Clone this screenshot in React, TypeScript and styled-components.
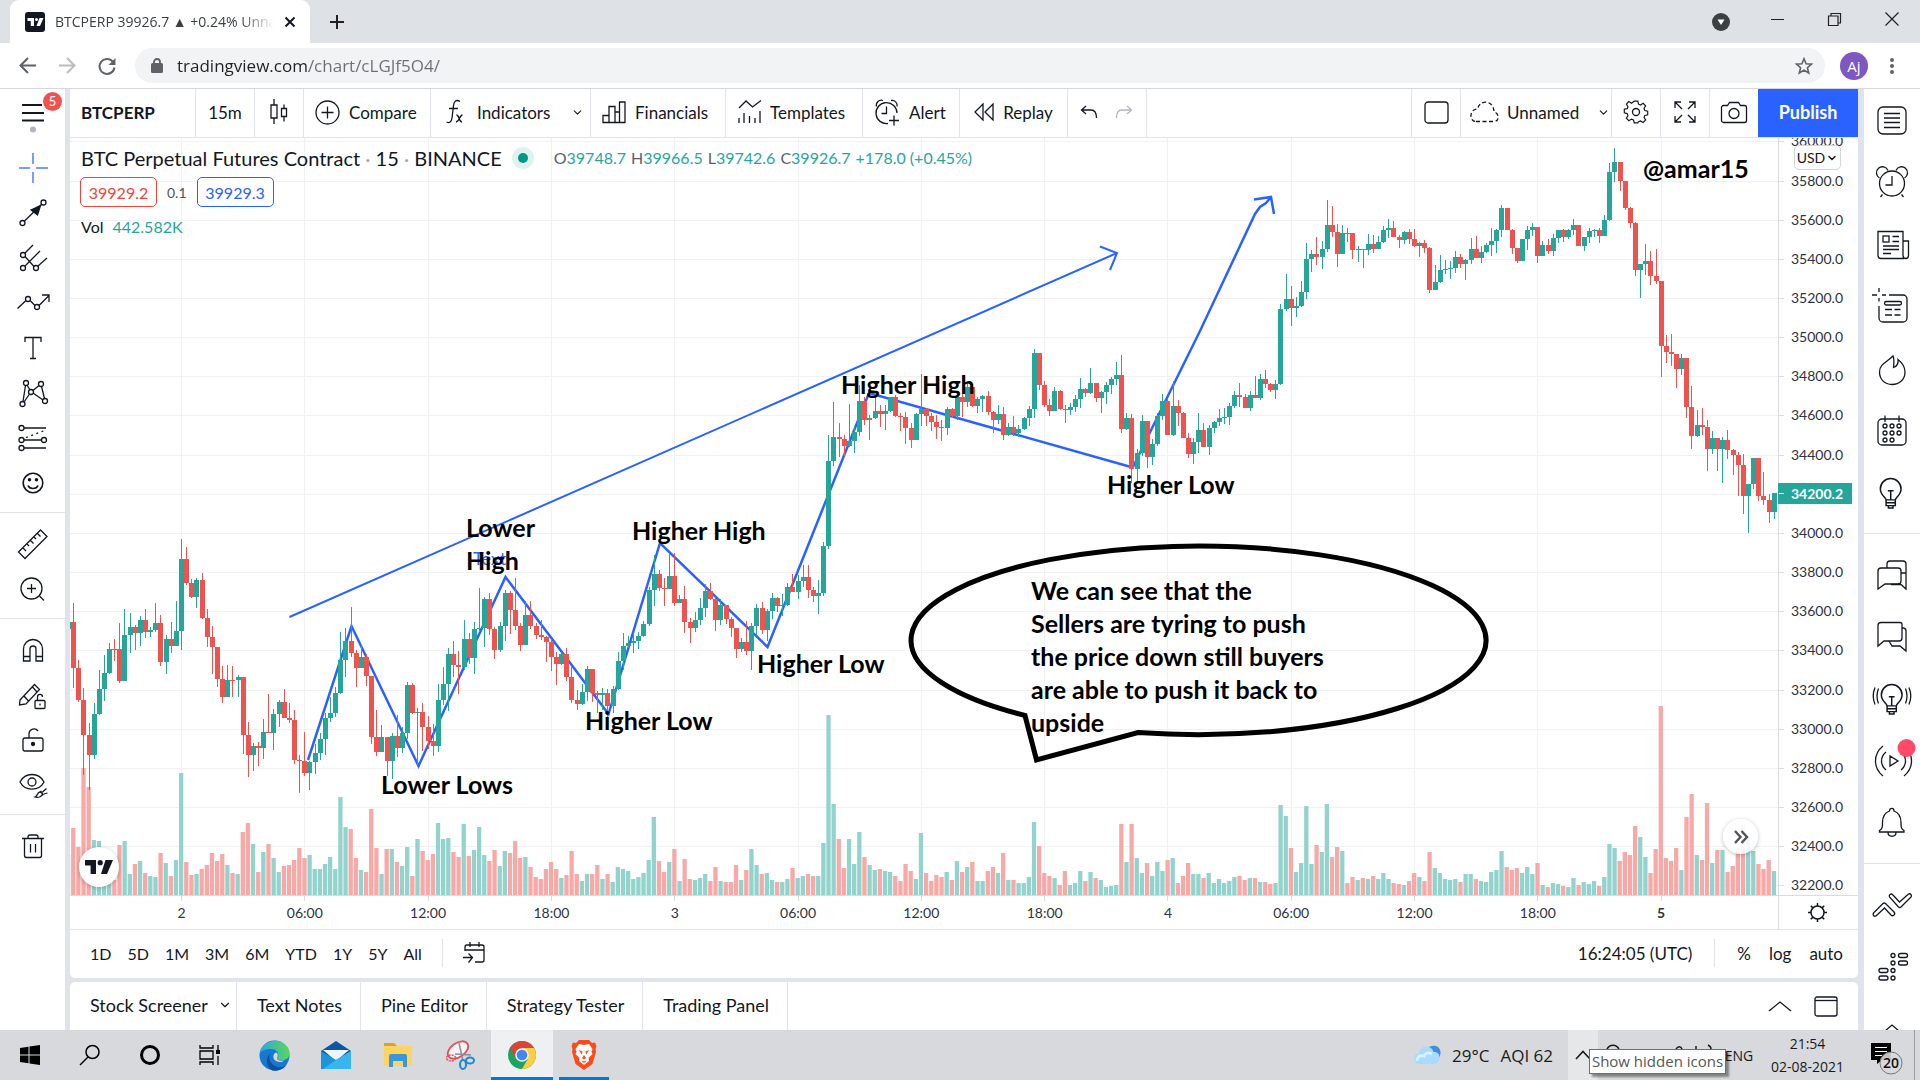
import React from "react";
import styled, { createGlobalStyle, css } from "styled-components";
import { LuChevronDown } from "react-icons/lu";

const GlobalStyle = createGlobalStyle`
  * { box-sizing: border-box; }
  body {
    margin: 0;
    font-family: Lato, "Open Sans", sans-serif;
    color: #131722;
    overflow: hidden;
  }
  button, input {
    font: inherit;
    color: inherit;
    border: 0;
    padding: 0;
    background: none;
  }
  svg { display: block; flex-shrink: 0; overflow: visible; }
`;

/* ---------- chart data ---------- */

// [high, low, close, volume] in chart units, open is the previous close
type Bar = [number, number, number, number];

const FIRST_INDEX = -22;
const FIRST_OPEN = 629;

const bars: Bar[] = [
  [622, 629, 622, 40], [603, 688, 668, 67], [660, 702, 700, 48], [688, 775, 735, 127], [723, 790, 755, 108],
  [703, 759, 714, 55], [670, 715, 689, 54], [655, 701, 673, 40], [643, 674, 649, 40], [639, 661, 649, 15],
  [623, 683, 681, 50], [609, 681, 635, 54], [613, 653, 627, 21], [625, 650, 633, 31], [616, 646, 620, 34],
  [609, 638, 632, 22], [627, 637, 630, 19], [603, 632, 623, 18], [615, 666, 662, 42], [635, 674, 639, 32],
  [622, 653, 646, 19], [601, 646, 631, 35], [539, 650, 559, 122], [547, 585, 583, 33], [579, 598, 597, 20],
  [578, 608, 580, 21], [573, 619, 618, 26], [609, 647, 637, 30], [626, 674, 647, 42], [647, 687, 679, 34],
  [666, 703, 697, 41], [665, 697, 680, 30], [666, 697, 680, 22], [675, 697, 677, 21], [677, 754, 735, 63],
  [722, 777, 755, 72], [743, 771, 746, 51], [742, 766, 748, 23], [719, 759, 732, 43], [694, 733, 733, 51],
  [709, 750, 714, 37], [700, 727, 702, 23], [689, 718, 718, 29], [703, 723, 720, 30], [710, 764, 760, 35],
  [755, 793, 761, 47], [732, 776, 773, 37], [761, 790, 762, 40], [744, 774, 753, 26], [733, 760, 739, 26],
  [713, 755, 718, 31], [697, 722, 713, 38], [687, 717, 693, 26], [632, 694, 660, 98], [628, 677, 641, 68],
  [607, 657, 653, 66], [650, 687, 668, 37], [646, 668, 657, 25], [654, 686, 676, 23], [676, 744, 737, 86],
  [710, 756, 752, 47], [725, 752, 737, 21], [737, 776, 761, 46], [733, 779, 736, 46], [715, 757, 748, 33],
  [727, 753, 733, 29], [682, 739, 685, 48], [683, 714, 713, 19], [708, 765, 712, 56], [703, 751, 727, 44],
  [716, 749, 741, 35], [724, 756, 746, 41], [684, 752, 700, 72], [667, 705, 684, 56], [648, 711, 654, 57],
  [641, 677, 665, 43], [651, 694, 667, 38], [620, 670, 639, 71], [633, 664, 658, 39], [622, 674, 629, 45],
  [588, 632, 628, 68], [597, 647, 599, 40], [593, 635, 629, 34], [627, 659, 650, 45], [622, 652, 626, 29],
  [590, 641, 593, 44], [591, 634, 610, 42], [578, 630, 626, 54], [623, 651, 645, 37], [601, 644, 615, 38],
  [601, 629, 626, 28], [623, 639, 635, 18], [620, 640, 637, 16], [636, 662, 642, 26], [639, 671, 657, 33],
  [652, 685, 664, 26], [652, 665, 654, 17], [648, 681, 677, 20], [667, 703, 700, 44], [690, 710, 704, 21],
  [684, 705, 692, 14], [666, 701, 669, 21], [669, 702, 693, 21], [691, 713, 695, 30], [688, 710, 693, 16],
  [689, 719, 706, 21], [686, 713, 689, 13], [652, 690, 661, 28], [633, 670, 646, 26], [636, 648, 643, 24],
  [635, 653, 641, 16], [632, 649, 636, 18], [621, 637, 624, 22], [587, 626, 590, 35], [555, 606, 574, 78],
  [570, 591, 588, 34], [578, 606, 589, 23], [553, 589, 576, 33], [553, 606, 603, 46], [595, 603, 599, 14],
  [586, 633, 622, 36], [618, 643, 628, 16], [612, 632, 620, 15], [598, 625, 608, 17], [584, 617, 591, 21],
  [583, 600, 599, 14], [597, 631, 620, 28], [599, 625, 605, 14], [605, 624, 619, 13], [617, 637, 628, 13],
  [628, 658, 649, 30], [638, 652, 642, 15], [621, 655, 651, 25], [623, 670, 626, 46], [604, 636, 608, 30],
  [602, 634, 630, 21], [609, 641, 611, 22], [593, 619, 598, 15], [597, 612, 606, 13], [594, 616, 605, 13],
  [583, 606, 587, 16], [574, 592, 592, 27], [575, 599, 581, 17], [565, 587, 577, 19], [565, 598, 590, 21],
  [587, 602, 596, 19], [580, 614, 593, 19], [542, 596, 546, 52], [435, 549, 461, 180], [402, 466, 437, 91],
  [423, 457, 439, 56], [435, 456, 446, 27], [404, 447, 441, 56], [426, 453, 432, 31], [385, 436, 401, 63],
  [397, 425, 420, 38], [415, 440, 418, 30], [395, 419, 411, 25], [405, 427, 414, 26], [405, 430, 411, 24],
  [397, 412, 397, 23], [395, 417, 416, 19], [413, 431, 417, 14], [412, 444, 428, 31], [423, 448, 440, 24],
  [413, 440, 414, 16], [374, 426, 409, 62], [408, 426, 416, 22], [413, 431, 422, 14], [415, 439, 427, 20],
  [420, 441, 428, 18], [407, 435, 409, 23], [408, 418, 416, 15], [394, 420, 397, 34], [393, 417, 402, 23],
  [383, 407, 387, 28], [384, 407, 406, 33], [397, 413, 399, 14], [395, 412, 396, 14], [391, 415, 412, 24],
  [411, 433, 420, 28], [405, 424, 414, 22], [407, 440, 435, 42], [423, 436, 427, 15], [416, 436, 433, 15],
  [425, 437, 429, 12], [417, 430, 418, 12], [406, 426, 409, 18], [349, 418, 353, 73], [353, 390, 385, 49],
  [381, 407, 405, 22], [399, 416, 411, 19], [387, 411, 391, 17], [390, 410, 409, 10], [405, 423, 410, 24],
  [403, 415, 407, 10], [395, 412, 399, 12], [378, 408, 389, 24], [388, 397, 393, 14], [368, 394, 383, 23],
  [383, 402, 398, 17], [391, 413, 392, 15], [382, 404, 385, 8], [377, 394, 379, 9], [362, 385, 375, 10],
  [355, 433, 429, 71], [413, 430, 418, 33], [414, 483, 469, 71], [449, 483, 453, 37], [415, 456, 421, 22],
  [421, 468, 457, 32], [439, 465, 444, 19], [413, 446, 416, 33], [394, 420, 401, 24], [399, 435, 435, 35],
  [381, 436, 406, 37], [400, 426, 413, 12], [412, 438, 438, 19], [433, 458, 454, 32], [438, 464, 442, 21],
  [413, 453, 430, 21], [423, 447, 447, 17], [425, 455, 428, 22], [421, 433, 422, 12], [409, 426, 418, 16],
  [408, 424, 417, 12], [403, 425, 406, 14], [391, 408, 395, 18], [383, 407, 397, 19], [394, 408, 408, 15],
  [391, 411, 395, 17], [376, 398, 398, 17], [374, 400, 379, 13], [370, 388, 384, 13], [383, 392, 390, 11],
  [380, 399, 384, 12], [304, 385, 309, 90], [274, 311, 299, 79], [286, 326, 308, 47], [297, 317, 306, 23],
  [281, 307, 292, 32], [243, 299, 259, 89], [250, 272, 254, 31], [237, 265, 257, 50], [241, 269, 249, 43],
  [200, 252, 225, 91], [206, 237, 232, 38], [224, 267, 254, 48], [225, 254, 233, 44], [228, 242, 233, 12],
  [233, 259, 250, 18], [246, 262, 249, 15], [249, 268, 250, 17], [234, 255, 244, 16], [235, 253, 249, 19],
  [236, 249, 242, 16], [226, 243, 230, 22], [219, 238, 228, 16], [221, 237, 237, 12], [235, 248, 240, 11],
  [231, 244, 232, 10], [229, 244, 239, 14], [229, 247, 246, 22], [242, 257, 243, 18], [240, 253, 248, 14],
  [247, 293, 290, 43], [265, 290, 282, 27], [255, 283, 270, 22], [260, 274, 269, 16], [261, 279, 268, 15],
  [251, 273, 257, 16], [254, 268, 264, 13], [259, 280, 260, 21], [238, 264, 249, 21], [236, 258, 258, 16],
  [246, 263, 252, 14], [243, 253, 245, 13], [228, 256, 241, 23], [229, 253, 230, 25], [205, 237, 208, 44],
  [208, 230, 230, 28], [229, 254, 248, 25], [248, 263, 261, 27], [239, 261, 239, 22], [226, 250, 230, 28],
  [223, 236, 227, 21], [227, 263, 256, 32], [241, 256, 245, 10], [239, 254, 251, 8], [234, 256, 238, 12],
  [230, 243, 230, 11], [229, 242, 237, 9], [229, 239, 230, 8], [219, 235, 225, 17], [225, 246, 246, 10],
  [237, 251, 237, 13], [228, 243, 231, 11], [229, 237, 230, 14], [228, 243, 236, 9], [215, 236, 220, 18],
  [163, 221, 172, 51], [148, 182, 162, 47], [162, 191, 181, 34], [181, 210, 208, 43], [207, 228, 223, 40],
  [222, 276, 270, 69], [264, 298, 264, 58], [244, 275, 261, 38], [251, 285, 276, 22], [249, 284, 281, 46],
  [281, 377, 346, 189], [335, 363, 352, 37], [334, 366, 354, 34], [354, 388, 369, 47], [354, 375, 358, 25],
  [358, 418, 407, 78], [386, 449, 436, 101], [410, 437, 425, 40], [408, 435, 427, 35], [420, 471, 449, 92],
  [431, 454, 438, 32], [439, 471, 449, 45], [437, 483, 440, 45], [430, 459, 450, 23], [449, 475, 455, 29],
  [452, 496, 465, 47], [454, 514, 496, 70], [484, 533, 484, 57], [458, 489, 458, 44], [458, 501, 496, 31],
  [472, 505, 500, 26], [494, 523, 512, 35], [493, 519, 493, 24],
];

const barX = (i: number) => 181.5 + i * 5.1377;
const priceY = (price: number) => 180.5 + (35800 - price) * 0.1958;

const candles = bars.map(([high, low, close, volume], n) => {
  const open = n === 0 ? FIRST_OPEN : bars[n - 1][2];
  return { x: barX(n + FIRST_INDEX), open, high, low, close, volume, up: close < open };
});

const timeLabels = ["2", "06:00", "12:00", "18:00", "3", "06:00", "12:00", "18:00", "4", "06:00", "12:00", "18:00", "5"];
const priceLabels = Array.from({ length: 20 }, (_, i) => 36000 - i * 200);

const notes = [
  { x: 466, y: 537, text: "Lower" },
  { x: 466, y: 570, text: "High" },
  { x: 381, y: 794, text: "Lower Lows" },
  { x: 632, y: 540, text: "Higher High" },
  { x: 585, y: 730, text: "Higher Low" },
  { x: 757, y: 673, text: "Higher Low" },
  { x: 841, y: 394, text: "Higher High" },
  { x: 1107, y: 494, text: "Higher Low" },
  { x: 1643, y: 178, text: "@amar15" },
  { x: 1031, y: 600, text: "We can see that the" },
  { x: 1031, y: 633, text: "Sellers are tyring to push" },
  { x: 1031, y: 666, text: "the price down still buyers" },
  { x: 1031, y: 699, text: "are able to push it back to" },
  { x: 1031, y: 732, text: "upside" },
];

/* ---------- page ---------- */

const Page = styled.div`
  display: flex;
  flex-direction: column;
  height: 100vh;
  background: #fff;
`;

/* ---------- browser ---------- */

const segoe = css`
  font-family: "Open Sans", "Noto Sans", sans-serif;
`;

const TabStrip = styled.div`
  ${segoe}
  height: 43px;
  background: #dee1e6;
  display: flex;
  padding-left: 10px;
  font-size: 14px;
`;

const Tab = styled.div`
  width: 300px;
  height: 43px;
  background: #fff;
  border-radius: 9px 9px 0 0;
  display: flex;
  align-items: center;
  padding: 0 14px 0 15px;
  gap: 10px;
`;

const TabTitle = styled.span`
  flex: 1;
  overflow: hidden;
  white-space: nowrap;
  color: #3c4043;
  mask-image: linear-gradient(to right, #000 85%, transparent);
`;

const StripButton = styled.button<{ $w?: number; $low?: boolean }>`
  width: ${p => p.$w ?? 57}px;
  height: ${p => (p.$low ? 43 : 38)}px;
  display: flex;
  align-items: center;
  justify-content: center;
  color: #202124;
`;

const Spacer = styled.div`
  flex: 1;
`;

const AddressRow = styled.div`
  ${segoe}
  height: 46px;
  border-bottom: 1px solid #d5d7db;
  display: flex;
  align-items: center;
  padding: 0 8px 0 7px;
  color: #5f6368;
`;

const NavButton = styled.button`
  width: 40px;
  height: 36px;
  display: flex;
  align-items: center;
  justify-content: center;
  color: #5f6368;
`;

const UrlPill = styled.label`
  flex: 1;
  height: 35px;
  margin: 0 15px 0 8px;
  border-radius: 18px;
  background: #f1f3f4;
  display: flex;
  align-items: center;
  padding: 0 12px 0 16px;
  gap: 14px;
`;

const UrlInput = styled.input`
  flex: 1;
  outline: none;
  font-size: 17px;
  background: linear-gradient(to right, #202124 132px, #6b6f74 132px);
  background-clip: text;
  color: transparent;
`;

const Avatar = styled.button`
  width: 28px;
  height: 28px;
  margin-right: 4px;
  border-radius: 50%;
  background: #7e57c2;
  color: #fff;
  font-size: 15px;
`;

/* ---------- workspace ---------- */

const Workspace = styled.div`
  flex: 1;
  min-height: 0;
  display: flex;
  background: #e0e3eb;
`;

const LeftBar = styled.nav`
  width: 65px;
  margin-right: 5px;
  background: #fff;
`;

const MenuButton = styled.button`
  position: relative;
  width: 65px;
  height: 48px;
  display: flex;
  justify-content: center;
  padding-top: 13px;
`;

const MenuBadge = styled.span`
  position: absolute;
  top: 3px;
  right: 3px;
  width: 19px;
  height: 19px;
  border-radius: 50%;
  background: #ef5350;
  color: #fff;
  font-size: 13px;
  line-height: 19px;
  text-align: center;
`;

const ToolGroup = styled.div`
  padding: 8px 0 7px;
  border-bottom: 1px solid #e0e3eb;

  &:last-child {
    border-bottom: 0;
  }
`;

const ToolButton = styled.button`
  width: 65px;
  height: 45px;
  display: flex;
  align-items: center;
  justify-content: center;
`;

const Main = styled.main`
  flex: 1;
  min-width: 0;
  display: flex;
  flex-direction: column;
  gap: 4px;
`;

const ChartPanel = styled.section`
  flex: 1;
  min-height: 0;
  display: flex;
  flex-direction: column;
  background: #fff;
  border-radius: 0 0 5px 5px;
`;

const Header = styled.header`
  height: 49px;
  display: flex;
  border-bottom: 1px solid #e0e3eb;
  font-size: 17px;
`;

const HeaderButton = styled.button<{ $w: number; $bold?: boolean; $left?: boolean; $noLine?: boolean }>`
  width: ${p => p.$w}px;
  display: flex;
  align-items: center;
  justify-content: ${p => (p.$left ? "flex-start" : "center")};
  padding-left: ${p => (p.$left ? 11 : 0)}px;
  padding-bottom: 2px;
  gap: 9px;
  font-weight: ${p => (p.$bold ? 700 : 400)};
  border-right: ${p => (p.$noLine ? 0 : 1)}px solid #e0e3eb;
  white-space: nowrap;
`;

const HeaderGap = styled.div`
  flex: 1;
  border-left: 1px solid #e0e3eb;
  border-right: 1px solid #e0e3eb;
`;

const Publish = styled.button`
  width: 100px;
  padding-bottom: 2px;
  background: #2962ff;
  color: #fff;
  font-size: 18px;
  font-weight: 700;
`;

const ChartArea = styled.div`
  position: relative;
  flex: 1;
  min-height: 0;
  overflow: hidden;
`;

const ChartSvg = styled.svg`
  width: 100%;
  height: 100%;
  font-family: Lato, sans-serif;
`;

const Legend = styled.div`
  position: absolute;
  top: 7px;
  left: 10px;
  display: flex;
  flex-direction: column;
  font-size: 16px;
`;

const LegendRow = styled.div`
  display: flex;
  align-items: center;
  height: 25px;
`;

const SymbolTitle = styled.h1`
  margin: 0 16px 0 1px;
  font-size: 20px;
  font-weight: 400;

  i {
    font-style: normal;
    color: #a3a6af;
  }
`;

const StatusDot = styled.span`
  width: 10px;
  height: 10px;
  border-radius: 50%;
  background: #009688;
  box-shadow: 0 0 0 6px #dff2f0;
  margin: 0 26px 0 0;
`;

const Ohlc = styled.span`
  margin-right: 5px;
  color: #26a69a;

  b {
    font-weight: 400;
    color: #5d606b;
  }
`;

const QuoteRow = styled.div`
  display: flex;
  align-items: center;
  gap: 10px;
  margin: 7px 0 7px;
  font-size: 14px;
  color: #50535e;
`;

const VolumeRow = styled(LegendRow)`
  gap: 9px;
  padding-left: 1px;
`;

const QuoteButton = styled.button<{ $color: string }>`
  width: 77px;
  height: 30px;
  border: 1px solid ${p => p.$color};
  border-radius: 5px;
  color: ${p => p.$color};
  background: #fff;
  font-size: 16px;
`;

const CurrencyButton = styled.button`
  position: absolute;
  top: 7px;
  right: 17px;
  width: 47px;
  height: 25px;
  display: flex;
  align-items: center;
  justify-content: center;
  gap: 1px;
  border: 1px solid #d1d4dc;
  border-radius: 5px;
  background: #fff;
  font-size: 14px;
`;

const RoundButton = styled.button<{ $size: number }>`
  position: absolute;
  width: ${p => p.$size}px;
  height: ${p => p.$size}px;
  border-radius: 50%;
  background: rgba(255, 255, 255, 0.88);
  box-shadow: 0 1px 4px rgba(0, 0, 0, 0.25);
  display: flex;
  align-items: center;
  justify-content: center;
`;

const LogoButton = styled(RoundButton)`
  left: 9px;
  bottom: 42px;
  background: #fff;
`;

const ScrollButton = styled(RoundButton)`
  right: 100px;
  bottom: 75px;
  color: #50535e;
`;

const RangeBar = styled.div`
  height: 49px;
  border-top: 1px solid #e0e3eb;
  display: flex;
  align-items: center;
  padding: 0 15px 2px 20px;
  gap: 16px;
  font-size: 16px;
`;

const TextButton = styled.button`
  white-space: nowrap;
`;

const Divider = styled.span`
  width: 1px;
  height: 28px;
  margin: 0 4px;
  background: #e0e3eb;
`;

const RangeRight = styled.div`
  display: flex;
  align-items: center;
  gap: 18px;
  font-size: 17px;
`;

const BottomTabs = styled.section`
  height: 48px;
  display: flex;
  background: #fff;
  border-radius: 5px 5px 0 0;
  font-size: 18px;
`;

const BottomTab = styled.button`
  display: flex;
  align-items: center;
  gap: 10px;
  padding: 0 18px 2px 20px;
  border-right: 1px solid #e0e3eb;
  white-space: nowrap;

  &:first-child {
    padding-right: 4px;
  }
`;

const BottomActions = styled.div`
  margin-left: auto;
  display: flex;
  align-items: center;
  gap: 22px;
  padding-right: 20px;
`;

const RightBar = styled.nav`
  width: 56px;
  margin-left: 6px;
  background: #fff;
  overflow: hidden;
`;

const WidgetGroup = styled.div`
  padding: 1px 0 9px;
  border-bottom: 1px solid #e0e3eb;

  & + & {
    padding-top: 10px;
  }
`;

const WidgetButton = styled.button`
  width: 56px;
  height: 62px;
  display: flex;
  align-items: center;
  justify-content: center;
`;

/* ---------- taskbar ---------- */

const Taskbar = styled.footer`
  ${segoe}
  position: relative;
  height: 50px;
  background: #d8d9dc;
  display: flex;
  color: #1b1b1b;
`;

const Pinned = styled.div`
  display: flex;
  margin-left: 3px;
`;

const TaskButton = styled.button<{ $wide?: boolean; $active?: boolean; $running?: boolean }>`
  position: relative;
  width: ${p => (p.$wide ? 62 : 60)}px;
  display: flex;
  align-items: center;
  justify-content: center;
  color: #000;
  background: ${p => (p.$active ? "#eff0f1" : "none")};

  &::after {
    content: "";
    display: ${p => (p.$running ? "block" : "none")};
    position: absolute;
    bottom: 0;
    left: ${p => (p.$active ? 0 : 6)}px;
    right: ${p => (p.$active ? 0 : 6)}px;
    height: 3px;
    background: #0078d7;
  }
`;

const Weather = styled.button`
  display: flex;
  align-items: center;
  gap: 11px;
  font-size: 17px;
  margin-right: 15px;
`;

const TrayToggle = styled.button`
  position: relative;
  width: 30px;
  background: #e6e7e9;
  display: flex;
  align-items: center;
  justify-content: center;
`;

const Tooltip = styled.span`
  position: absolute;
  top: 19px;
  left: 21px;
  z-index: 2;
  width: 137px;
  height: 25px;
  border: 1px solid #6f6f6f;
  background: #fff;
  box-shadow: 3px 3px 2px rgba(0, 0, 0, 0.4);
  color: #575757;
  font-size: 15px;
  line-height: 23px;
  text-align: center;
  white-space: nowrap;
`;

const TrayIcons = styled.div`
  width: 126px;
  padding-top: 15px;
`;

const Language = styled.button`
  width: 30px;
  font-size: 14px;
`;

const Clock = styled.button`
  width: 107px;
  font-size: 14px;
  line-height: 23px;
`;

const ActionCenter = styled.button`
  width: 54px;
  border-right: 1px solid #9a9b9e;
  margin-right: 5px;
  display: flex;
  align-items: center;
  justify-content: center;
  padding-top: 8px;
`;

/* ---------- icons ---------- */

type IconProps = {
  w?: number;
  h?: number;
  sw?: number;
  children: React.ReactNode;
};

const Icon = ({ w = 36, h = 36, sw = 1.3, children }: IconProps) => (
  <svg width={w} height={h} viewBox={`0 0 ${w} ${h}`} fill="none" stroke="currentColor" strokeWidth={sw} aria-hidden="true">
    {children}
  </svg>
);

const TvMark = ({ width = 28, color = "#131722" }: { width?: number; color?: string }) => (
  <svg width={width} height={width / 2} viewBox="0 0 28 14" fill={color} aria-hidden="true">
    <path d="M0 0h11v14H5.6V5.4H0z" />
    <circle cx="15.200" cy="2.700" r="2.600" />
    <path d="M20.500 0H28l-6 14h-6z" />
  </svg>
);

const bulb = (
  <>
    <path d="M14 22.500c0-2-5-4-5-9.500a9 9 0 0 1 18 0c0 5.500-5 7.500-5 9.500z" />
    <path d="M14 22.500v5h8v-5M14 25h8M16 27.500v2h4v-2M15.500 14.500h5M18 14.500v8" />
  </>
);

const leftTools: { label: string; icon: React.ReactNode }[][] = [
  [
    {
      label: "Cross",
      icon: <Icon><g stroke="#4c7dff" strokeWidth={1.5}><path d="M18 3v11M18 22v11M4 18h11M21 18h12" /></g></Icon>,
    },
    {
      label: "Trend line",
      icon: (
        <Icon>
          <circle cx="7.500" cy="28" r="2.500" /><circle cx="28.500" cy="7.500" r="2.500" />
          <path d="M9.500 26 26.500 9.500" /><path d="M16 15l9.500-4.500L22.500 20z" fill="currentColor" />
        </Icon>
      ),
    },
    {
      label: "Pitchfork",
      icon: (
        <Icon>
          <circle cx="8" cy="15" r="2.500" /><circle cx="8" cy="28" r="2.500" /><circle cx="21" cy="28" r="2.500" />
          <path d="M10 16.500 19 26.500M10 13 18 5M10 26 25 11M23 26l9-8" />
        </Icon>
      ),
    },
    {
      label: "Brush",
      icon: (
        <Icon>
          <circle cx="13" cy="14" r="2.500" /><circle cx="22" cy="22" r="2.500" />
          <path d="M2.500 23.500 11 15.500M15 15.500l5 5M24 20.500 34 10.500M27 10h7v7" />
        </Icon>
      ),
    },
    { label: "Text", icon: <Icon><path d="M10 12V7.500h16V12M18 7.500v21M15 28.500h6" /></Icon> },
    {
      label: "Patterns",
      icon: (
        <Icon>
          <circle cx="11" cy="8" r="2.500" /><circle cx="26" cy="9" r="2.500" /><circle cx="16" cy="17" r="2.500" />
          <circle cx="7.500" cy="29" r="2.500" /><circle cx="30" cy="26" r="2.500" />
          <path d="M10.500 10.500 8 26.500M12 10l3 5M18 15.500l6-5M26.500 11.500l3 12M18 18l10 7M14.500 19 9 27" />
        </Icon>
      ),
    },
    {
      label: "Forecast",
      icon: (
        <Icon>
          <circle cx="6.500" cy="8" r="2.500" /><circle cx="6.500" cy="20" r="2.500" /><circle cx="29" cy="20" r="2.500" /><circle cx="6.500" cy="28" r="2.500" />
          <path d="M9 8h22M9 20h17.500M9 28h22" /><path d="M11 17.500 31 10" strokeDasharray="2 3.500" />
        </Icon>
      ),
    },
    {
      label: "Icons",
      icon: (
        <Icon sw={1.6}>
          <circle cx="18" cy="18" r="9.800" /><path d="M13 20.500c1.500 4 8.500 4 10 0" />
          <circle cx="14.500" cy="14.800" r="1" fill="currentColor" /><circle cx="21.500" cy="14.800" r="1" fill="currentColor" />
        </Icon>
      ),
    },
  ],
  [
    { label: "Measure", icon: <Icon><path d="M3.500 26 25.500 4l6.500 6.500-22 22zM8 22l3 3M12 18l2 2M15.500 14.500l3 3M19 11l2 2M22.500 7.500l3 3" /></Icon> },
    { label: "Zoom in", icon: <Icon><circle cx="16.500" cy="17.500" r="10.500" /><path d="M24.500 25l4.500 4.500M12 17.500h9M16.500 13v9" /></Icon> },
  ],
  [
    { label: "Magnet", icon: <Icon><path d="M8.500 29V17a9.500 9.500 0 0 1 19 0v12h-6.500V17a3 3 0 0 0-6 0v12zM8.500 24.500H15M21 24.500h6.500" /></Icon> },
    {
      label: "Stay in drawing mode",
      icon: (
        <Icon>
          <path d="M5 23 19.500 7.500l5 5L11 27l-6.500 1zM9 19l4.500 5M17.500 10l4.500 5" />
          <rect x="20" y="23.500" width="10" height="8" rx="1" /><path d="M22.500 23.500V20c0-3.500 5-3.500 5 0M25 26.500v2" />
        </Icon>
      ),
    },
    { label: "Lock drawings", icon: <Icon><rect x="8" y="16" width="20" height="13" rx="2" /><path d="M14 16v-4.500a5 5 0 0 1 9-2.500" /><circle cx="18" cy="22" r="1.500" fill="currentColor" /></Icon> },
    {
      label: "Hide drawings",
      icon: (
        <Icon>
          <path d="M5 15c5-10 19-10 24 0-5 9.500-19 9.500-24 0z" /><circle cx="17" cy="15" r="4" />
          <path d="M20 30c3-1 2-5 5-5l2.500 1.500c0 3-4 4.500-7.500 3.500zM25.500 24l3 4M27.500 25l4-3.500M29 27l3.500-1" />
        </Icon>
      ),
    },
  ],
  [
    { label: "Remove", icon: <Icon><path d="M9.500 10.500v17a2 2 0 0 0 2 2h13a2 2 0 0 0 2-2v-17M7 10.500h22M13 10.500V9a2 2 0 0 1 2-2h6a2 2 0 0 1 2 2v1.500M15.500 16v8.500M20.500 16v8.500" /></Icon> },
  ],
];

const widgets: { label: string; icon: React.ReactNode }[][] = [
  [
    { label: "Watchlist", icon: <Icon><rect x="4" y="4" width="28" height="27" rx="5" /><path d="M10 10.500h16M10 15h16M10 19.500h16M10 24.500h16" /></Icon> },
    {
      label: "Alerts",
      icon: (
        <Icon>
          <circle cx="18" cy="18.500" r="12.500" /><path d="M18 11v9h-6.500M8.500 29.500 6.500 32M27.500 29.500l2 2.500" />
          <path d="M5.500 13a6 6 0 1 1 8.500-7.500M22 5.500a6 6 0 1 1 8.500 7.500" />
        </Icon>
      ),
    },
    {
      label: "News",
      icon: (
        <Icon>
          <path d="M30 31.500H7a3 3 0 0 1-3-3v-24h25v24c0 4 5.500 4 5.500 0V14H29" />
          <rect x="9" y="9" width="6" height="6" /><path d="M18.500 9.500H25M18.500 14.500H25M9 19h16M9 22.500h16M9 26.500h8" />
        </Icon>
      ),
    },
    {
      label: "Data window",
      icon: (
        <Icon>
          <path d="M5-1v4M5 9v3.500M-2 6h5M8 6h4M15 6h14a4 4 0 0 1 4 4v19a4 4 0 0 1-4 4H9a4 4 0 0 1-4-4V17" />
          <rect x="10.500" y="12.500" width="17" height="3.500" rx="1.700" />
          <path d="M11 20.500h7M20.500 20.500h6M11 26h7M20.500 26h6" />
        </Icon>
      ),
    },
    {
      label: "Hotlists",
      icon: <Icon><path d="M18 33.500c-7.500 0-12.500-5.500-12.500-12.500C5.500 13 13 11 19 5c1.500 3.500 1 6 .5 11.500 3-1 5-4 4.500-8 5 4 7 8 7 12.500 0 7.500-5.500 12.500-13 12.500z" /></Icon>,
    },
    {
      label: "Calendar",
      icon: (
        <Icon>
          <rect x="4" y="6" width="28" height="26" rx="4" /><path d="M11 2.500V9M25 2.500V9" />
          {[[18, 13], [25, 13], [11, 13], [11, 20], [18, 20], [25, 20], [11, 27], [18, 27]].map(([x, y]) => (
            <circle key={`${x}-${y}`} cx={x} cy={y} r="2" />
          ))}
        </Icon>
      ),
    },
    { label: "Ideas", icon: <Icon><g transform="translate(-4 -1) scale(1.150)">{bulb}</g></Icon> },
  ],
  [
    { label: "Public chats", icon: <Icon><path d="M4 32V14a3 3 0 0 1 3-3h17a3 3 0 0 1 3 3v10a3 3 0 0 1-3 3H11z" /><path d="M13 11V7a3 3 0 0 1 3-3h13a3 3 0 0 1 3 3v25l-5-4.500H17M27 16h5" /></Icon> },
    { label: "Private chats", icon: <Icon><path d="M4 27V6.500a3 3 0 0 1 3-3h19a2 2 0 0 1 2 2V19a3 3 0 0 1-3 3H10z" /><path d="M28 9h1.500a3 3 0 0 1 2.500 3v20l-6-5H18l-3-5" /></Icon> },
    {
      label: "Idea stream",
      icon: (
        <Icon w={44}>
          <g transform="translate(1 -1) scale(1.150)">{bulb}</g>
          <path d="M8.500 7.500c-2 5-2 10 0 15M5 6.500c-2.500 6-2.500 11 0 17M35.500 7.500c2 5 2 10 0 15M39 6.500c2.500 6 2.500 11 0 17" />
        </Icon>
      ),
    },
    {
      label: "Streams",
      icon: (
        <Icon w={44}>
          <path d="M20 13v10l8-5zM13 3c-10 8-10 22 0 30M16 9c-6 5-6 13 0 18M31 9c6 5 6 13 0 18M34 3c10 8 10 22 0 30" />
          <circle cx="36.500" cy="5" r="9" fill="#ff4a68" stroke="none" />
        </Icon>
      ),
    },
    { label: "Notifications", icon: <Icon><path d="M5.500 26.500c3-2 3-3 3-8 0-7 3-10 7-11.500 0-3.500 4.500-3.500 4.500 0 4 1.500 7 4.500 7 11.500 0 5 0 6 3 8v1.500H5.500zM14 28.500c0 5 8 5 8 0" transform="translate(0 -1)" /></Icon> },
  ],
  [
    {
      label: "Order panel",
      icon: (
        <Icon w={44}>
          <path d="M3.500 26 13 16.500a2 2 0 0 1 2.500 0L24 25a2 2 0 0 1-3 3l-6.500-7L6 29a2 2 0 0 1-2.500-3z" />
          <path d="M19.500 10a2 2 0 0 1 3-2.500l7 7.500 9-8a2 2 0 0 1 2.500 3l-10 10a2 2 0 0 1-2.500 0z" />
        </Icon>
      ),
    },
    {
      label: "DOM",
      icon: (
        <Icon>
          {[5, 12.5, 20, 27.5].map(y => <circle key={y} cx="19" cy={y + 1.5} r="2" />)}
          <rect x="24.500" y="4.500" width="9" height="4" rx="2" /><rect x="24.500" y="12" width="9" height="4" rx="2" />
          <rect x="5" y="19.500" width="9" height="4" rx="2" /><rect x="5" y="27" width="9" height="4" rx="2" />
        </Icon>
      ),
    },
    { label: "Object tree", icon: <Icon><path d="M4 26 18 14 32 26 18 34z" /></Icon> },
  ],
];

/* ---------- sections ---------- */

const BrowserChrome = () => (
  <>
    <TabStrip>
      <Tab>
        <svg width="20" height="20" viewBox="0 0 20 20" aria-hidden="true">
          <rect width="20" height="20" rx="3" fill="#131722" />
          <path d="M2.500 6h6.500v8H5.800V9H2.500zM14.500 6h4l-3.500 8h-3.500z" fill="#fff" />
          <circle cx="11.500" cy="7.500" r="1.500" fill="#fff" />
        </svg>
        <TabTitle>BTCPERP 39926.7 ▲ +0.24% Unnamed</TabTitle>
        <button aria-label="Close tab">
          <Icon w={12} h={12} sw={2}><path d="M1.500 1.500l9 9M10.500 1.500l-9 9" /></Icon>
        </button>
      </Tab>
      <StripButton $w={54} $low aria-label="New tab">
        <Icon w={16} h={16} sw={2}><path d="M8 1v14M1 8h14" /></Icon>
      </StripButton>
      <Spacer />
      <StripButton $low aria-label="Tab search">
        <svg width="18" height="18" viewBox="0 0 18 18" aria-hidden="true">
          <circle cx="9" cy="9" r="9" fill="#3c4043" /><path d="M5.500 6.500h7L9 12z" fill="#fff" />
        </svg>
      </StripButton>
      <StripButton aria-label="Minimize"><Icon w={13} h={13} sw={1}><path d="M0 6.500h13" /></Icon></StripButton>
      <StripButton aria-label="Restore">
        <Icon w={13} h={13} sw={1.2}><path d="M.5 3h9.500v9.500H.5zM3 3V.5h9.500V10H10" /></Icon>
      </StripButton>
      <StripButton aria-label="Close"><Icon w={14} h={14} sw={1.2}><path d="M.5.5l13 13M13.500.5l-13 13" /></Icon></StripButton>
    </TabStrip>
    <AddressRow>
      <NavButton aria-label="Back"><Icon w={17} h={17} sw={2}><path d="M17 8.500H2M9 1 1.500 8.500 9 16" /></Icon></NavButton>
      <NavButton aria-label="Forward"><Icon w={17} h={17} sw={2}><path d="M0 8.500h15M8 1l7.500 7.500L8 16" stroke="#babcbe" /></Icon></NavButton>
      <NavButton aria-label="Reload">
        <Icon w={18} h={18} sw={2}><path d="M15.500 5.500a7.500 7.500 0 1 0 1 5" /><path d="M17.500 1v7h-7z" fill="currentColor" stroke="none" /></Icon>
      </NavButton>
      <UrlPill>
        <svg width="12" height="15" viewBox="0 0 12 15" aria-hidden="true">
          <rect y="5" width="12" height="10" rx="1.500" fill="#5f6368" /><path d="M3 6V4a3 3 0 0 1 6 0v2" fill="none" stroke="#5f6368" strokeWidth="1.800" />
        </svg>
        <UrlInput aria-label="Address" defaultValue="tradingview.com/chart/cLGJf5O4/" />
        <Icon w={18} h={18} sw={1.6}><path d="M9 1.800l2.100 5 5.400.4-4.100 3.500 1.300 5.300L9 13.100 4.300 16l1.300-5.300L1.500 7.200l5.400-.4z" /></Icon>
      </UrlPill>
      <Avatar>Aj</Avatar>
      <NavButton aria-label="Browser menu">
        <svg width="4" height="18" viewBox="0 0 4 18" fill="#5f6368" aria-hidden="true">
          <circle cx="2" cy="3" r="2" /><circle cx="2" cy="9" r="2" /><circle cx="2" cy="15" r="2" />
        </svg>
      </NavButton>
    </AddressRow>
  </>
);

const ChartHeader = () => (
  <Header>
    <HeaderButton $w={126} $bold $left>BTCPERP</HeaderButton>
    <HeaderButton $w={59}>15m</HeaderButton>
    <HeaderButton $w={49} aria-label="Candles">
      <Icon w={18} h={26}><path d="M1 6h6v13H1zM4 0v6M4 19v6M11.500 9.500h5v8h-5zM14 5.500v4M14 17.500v5" /></Icon>
    </HeaderButton>
    <HeaderButton $w={127} $left>
      <Icon w={25} h={25}><circle cx="12.500" cy="12.500" r="11.500" /><path d="M12.500 6.500v12M6.500 12.500h12" /></Icon>
      Compare
    </HeaderButton>
    <HeaderButton $w={160} $left>
      <Icon w={26} h={26}><path d="M18 2.500c-4-2.500-6 0-6.500 4L10 19c-.5 4-2.500 5.500-5.500 4M7 9.500h9M14.500 16c3 0 2 7 5.500 7M20.500 16c-3 0-3 7-6.500 7" /></Icon>
      <span>Indicators</span>
      <Spacer />
      <LuChevronDown size={13} style={{ marginRight: 6 }} />
    </HeaderButton>
    <HeaderButton $w={135} $left>
      <Icon w={24} h={24}><path d="M1 15.500h6v7H1zM7 15.500V6.500h6v16H7M13 12h4.500v10.500H13M17.500 22.500V2H23v20.500z" /></Icon>
      Financials
    </HeaderButton>
    <HeaderButton $w={137} $left>
      <Icon w={24} h={26}><path d="M2 9l7-7 6.500 6L24 1.500M2 19v5M7 14v10M12.500 17v7M18 19v5M23 12v12" /></Icon>
      Templates
    </HeaderButton>
    <HeaderButton $w={97} $left>
      <Icon w={26} h={28}>
        <path d="M14 25.500A10.500 10.500 0 1 1 23 15M12.500 8.500v7h-5M20 17.500v10M15 22.500h10M2.500 8.500a5 5 0 0 1 6.500-6M17 2.500a5 5 0 0 1 6 6" />
      </Icon>
      Alert
    </HeaderButton>
    <HeaderButton $w={108}>
      <Icon w={20} h={20}><path d="M9 2v16L1 10zM19 2v16l-8-8z" /></Icon>
      Replay
    </HeaderButton>
    <HeaderButton $w={42} $noLine aria-label="Undo">
      <Icon w={18} h={14}><path d="M6 1 1.500 5 6 9M1.500 5H11c4 0 5.500 3 5.500 8" /></Icon>
    </HeaderButton>
    <HeaderButton $w={28} $noLine aria-label="Redo">
      <Icon w={18} h={14}><path d="M12 1l4.500 4L12 9M16.500 5H7c-4 0-5.500 3-5.500 8" stroke="#b2b5be" /></Icon>
    </HeaderButton>
    <HeaderButton as="span" $w={8} $noLine />
    <HeaderGap />
    <HeaderButton $w={49} aria-label="Layout"><Icon w={25} h={23}><rect x="1" y="1" width="23" height="21" rx="3" /></Icon></HeaderButton>
    <HeaderButton $w={151} $left>
      <Icon w={26} h={22}>
        <path d="M4 20.500h18c6 0 5-9 0-9.500 0-12-14-13-16.500-3C-3 8-3 20.500 4 20.500z" strokeDasharray="4 2.500" />
      </Icon>
      <span>Unnamed</span>
      <Spacer />
      <LuChevronDown size={13} style={{ marginRight: 6 }} />
    </HeaderButton>
    <HeaderButton $w={49} aria-label="Settings">
      <Icon w={26} h={26} sw={1.3}>
        <path d="M11 1h4l.8 3.300 2.200.9 2.900-1.800 2.800 2.800-1.800 2.900.9 2.200 3.200.7v4l-3.200.8-.9 2.200 1.800 2.900-2.800 2.800-2.900-1.800-2.200.9L15 25h-4l-.8-3.200-2.200-.9-2.900 1.800-2.800-2.800 1.800-2.900-.9-2.200L0 14v-4l3.200-.7.9-2.200-1.800-2.900 2.800-2.800L8 3.200z" transform="translate(1.300 1.300) scale(.9)" />
        <circle cx="13" cy="13" r="3.500" />
      </Icon>
    </HeaderButton>
    <HeaderButton $w={49} aria-label="Fullscreen">
      <Icon w={22} h={22}><path d="M1 7V1h6M1 1l7 7M15 1h6v6M21 1l-7 7M1 15v6h6M1 21l7-7M21 15v6h-6M21 21l-7-7" /></Icon>
    </HeaderButton>
    <HeaderButton $w={48} $noLine aria-label="Snapshot">
      <Icon w={28} h={23}>
        <path d="M3.500 4.500H7.500l2-3h9l2 3h4a2 2 0 0 1 2 2v13a2 2 0 0 1-2 2h-21a2 2 0 0 1-2-2v-13a2 2 0 0 1 2-2z" /><circle cx="14" cy="12.500" r="5" />
      </Icon>
    </HeaderButton>
    <Publish>Publish</Publish>
  </Header>
);

const Chart = () => (
  <ChartSvg viewBox="70 138 1788 791" preserveAspectRatio="xMaxYMin slice" role="img" aria-label="BTCPERP 15 minute chart">
    <defs>
      <clipPath id="pane"><rect x="70" y="138" width="1708" height="757" /></clipPath>
    </defs>
    <g shapeRendering="crispEdges">
      {priceLabels.map(p => <rect key={p} x="70" y={Math.round(priceY(p))} width="1708" height="1" fill="#f0f1f3" />)}
      {timeLabels.map((_, i) => <rect key={i} x={Math.round(barX(i * 24) - 0.5)} y="138" width="1" height="757" fill="#f0f1f3" />)}
    </g>
    <g clipPath="url(#pane)">
      {candles.map(c => (
        <rect key={c.x} x={c.x - 2.5} y={895 - c.volume} width="4.300" height={c.volume} fill={c.up ? "#93d3cd" : "#f7a9a7"} />
      ))}
      <g fill="none" stroke="#2962ff" strokeWidth="2">
        <path d="M289.500 617 1117 253M1100 246.500l17 6.500-7 17" />
        <path strokeWidth="2.500" d="M308 760 351.500 626 418.500 766 505.500 577 608.500 714 660 543 767.500 647 869 393 1131 467" />
        <path strokeWidth="2.500" d="M1133 467 1158 416 1200 331 1255 214l5-7 6-4 5-6M1254 199.500l17-2.500 3 17" />
      </g>
      <g shapeRendering="crispEdges">
        {candles.map(c => {
          const top = Math.min(c.open, c.close);
          const x = Math.round(c.x - 0.5);
          return (
            <g key={c.x} fill={c.up ? "#26a69a" : "#ef5350"}>
              <rect x={x} y={c.high} width="1" height={c.low - c.high} />
              <rect x={x - 2} y={top} width="5" height={Math.max(1, Math.abs(c.open - c.close))} />
            </g>
          );
        })}
      </g>
    </g>
    <path d="M1025 715.500A287.500 94.300 0 1 1 1138 732.500L1036.500 760z" fill="none" stroke="#000" strokeWidth="5" />
    <text x="473" y="565" fontSize="18" fill="#2962ff">Text</text>
    <g fontSize="25" fontWeight="700" fill="#000">
      {notes.map(n => <text key={`${n.x}-${n.y}`} x={n.x} y={n.y}>{n.text}</text>)}
    </g>
    <g fill="#d9dbe1" shapeRendering="crispEdges">
      <rect x="1778" y="138" width="1" height="791" />
      <rect x="70" y="895" width="1788" height="1" />
      {priceLabels.map(p => <rect key={p} x="1779" y={Math.round(priceY(p))} width="5" height="1" />)}
      {timeLabels.map((_, i) => <rect key={i} x={Math.round(barX(i * 24) - 0.5)} y="896" width="1" height="5" />)}
    </g>
    <g fontSize="14" fill="#2f333e">
      {priceLabels.filter(p => p !== 34200).map(p => <text key={p} x="1791" y={priceY(p) + 5}>{p}.0</text>)}
      {timeLabels.map((t, i) => (
        <text key={i} x={barX(i * 24)} y="918" textAnchor="middle" fontWeight={t === "5" ? 700 : 400}>{t}</text>
      ))}
    </g>
    <rect x="1778" y="483" width="74" height="21" fill="#26a69a" />
    <rect x="1779" y="493" width="5" height="1" fill="#fff" />
    <text x="1791" y="498.500" fontSize="14" fontWeight="700" fill="#fff">34200.2</text>
    <g fill="none" stroke="#131722" strokeWidth="1.500">
      <circle cx="1817.500" cy="912.500" r="6.500" />
      {[0, 45, 90, 135, 180, 225, 270, 315].map(a => (
        <path key={a} d="M1817.500 906v-3" transform={`rotate(${a} 1817.500 912.500)`} />
      ))}
    </g>
  </ChartSvg>
);

const ohlc = [["O", "39748.7"], ["H", "39966.5"], ["L", "39742.6"], ["C", "39926.7"], ["", "+178.0 (+0.45%)"]];

const ChartLegend = () => (
  <Legend>
    <LegendRow>
      <SymbolTitle>BTC Perpetual Futures Contract <i>·</i> 15 <i>·</i> BINANCE</SymbolTitle>
      <StatusDot />
      {ohlc.map(([k, v]) => <Ohlc key={v}><b>{k}</b>{v}</Ohlc>)}
    </LegendRow>
    <QuoteRow>
      <QuoteButton $color="#f44336">39929.2</QuoteButton>
      0.1
      <QuoteButton $color="#2962ff">39929.3</QuoteButton>
    </QuoteRow>
    <VolumeRow>
      <span>Vol</span>
      <Ohlc>442.582K</Ohlc>
    </VolumeRow>
  </Legend>
);

const ranges = ["1D", "5D", "1M", "3M", "6M", "YTD", "1Y", "5Y", "All"];

const TaskbarView = () => (
  <Taskbar>
    <TaskButton aria-label="Start">
      <svg width="20" height="20" viewBox="0 0 20 20" aria-hidden="true"><path d="M0 3l8.500-1.200v7.700H0zM9.500 1.600 20 0v9.500H9.500zM0 10.500h8.500v7.700L0 17zM9.500 10.500H20V20L9.500 18.400z" /></svg>
    </TaskButton>
    <TaskButton aria-label="Search"><Icon w={22} h={22} sw={1.5}><circle cx="13.500" cy="8" r="6.500" /><path d="M9 13 1 21" /></Icon></TaskButton>
    <TaskButton aria-label="Cortana"><Icon w={22} h={22} sw={3}><circle cx="11" cy="11" r="8.500" /></Icon></TaskButton>
    <TaskButton aria-label="Task view">
      <Icon w={22} h={20} sw={1.3}><path d="M1 0v3h13V0M1 6h13v8H1zM1 20v-3h13v3M19 0v5M19 11v9" /><path d="M17 5h4v4h-4z" fill="currentColor" stroke="none" /></Icon>
    </TaskButton>
    <Pinned>
      <TaskButton $wide aria-label="Edge">
        <svg width="31" height="31" viewBox="0 0 31 31" aria-hidden="true">
          <defs>
            <linearGradient id="edgeTop"><stop offset="0" stopColor="#2aa8e0" /><stop offset="1" stopColor="#5bd65b" /></linearGradient>
          </defs>
          <circle cx="15.500" cy="15.500" r="15" fill="#1878d0" />
          <path d="M.8 13C3 3 12-.5 19 1c8 1.500 12 8 11.500 13-.5 5-5 7-10 6-3-.6-2.500-2-1.500-3.500C20.500 12 16 8.500 11 9 6 9 2.500 11 .8 13z" fill="url(#edgeTop)" />
          <path d="M11.500 13c-3 5 0 12 7 14 4 1 7.500-.5 9.500-3-3 5.500-9 7.500-14.500 6.500C7 28 6 18 11.500 13z" fill="#0c52a0" />
          <path d="M17 12.500c3 1.500 1.500 4 1 5.500-.5 2 2.500 3.500 7 2.500-3 3-9 1.500-10.500-2.500-.5-2.500.5-5 2.500-5.500z" fill="#d8d9dc" />
        </svg>
      </TaskButton>
      <TaskButton $wide aria-label="Mail">
        <svg width="30" height="30" viewBox="0 0 30 30" aria-hidden="true">
          <path d="M0 11 15 1l15 10v18H0z" fill="#0b57a4" /><path d="M2 10h26L15 21z" fill="#eef4f8" />
          <path d="M0 11l15 9 15-9v18H0z" fill="#1c94dc" /><path d="M30 11v18H2l13-9z" fill="#38b5ee" /><path d="M3 10.500h24l-12 8z" fill="#eef4f8" />
        </svg>
      </TaskButton>
      <TaskButton $wide aria-label="File Explorer">
        <svg width="28" height="26" viewBox="0 0 28 26" aria-hidden="true">
          <path d="M0 1h10l3 3H0z" fill="#e0a021" /><path d="M0 4h28v20H0z" fill="#fcd462" />
          <path d="M5 25V14a2 2 0 0 1 2-2h14a2 2 0 0 1 2 2v11h-4v-6H9v6z" fill="#3b97d8" />
        </svg>
      </TaskButton>
      <TaskButton $wide aria-label="Snipping Tool">
        <svg width="30" height="30" viewBox="0 0 30 30" fill="none" aria-hidden="true">
          <ellipse cx="13" cy="10" rx="11.500" ry="7" fill="#f4f4f6" stroke="#e0525a" strokeWidth="1.800" transform="rotate(-35 13 10)" />
          <path d="M14 3l4 18M26 15 10 14" stroke="#8a8f96" strokeWidth="1.500" />
          <ellipse cx="18" cy="24.500" rx="3" ry="4.500" stroke="#1e88d2" strokeWidth="2" />
          <ellipse cx="25" cy="20.500" rx="4" ry="3" stroke="#1e88d2" strokeWidth="2" />
          <ellipse cx="6" cy="18" rx="4.500" ry="3" stroke="#e0525a" strokeWidth="1.500" strokeDasharray="2 1" />
        </svg>
      </TaskButton>
      <TaskButton $wide $active $running aria-label="Chrome">
        <svg width="28" height="28" viewBox="0 0 28 28" aria-hidden="true">
          <circle cx="14" cy="14" r="14" fill="#1da462" />
          <path d="M14 7h12.100A14 14 0 0 1 14 28l6-10.500z" fill="#ffcd40" />
          <path d="M1.900 7A14 14 0 0 1 26.100 7H14a7 7 0 0 0-6.100 10.500z" fill="#db4437" />
          <circle cx="14" cy="14" r="6.800" fill="#f1f1f1" /><circle cx="14" cy="14" r="5.300" fill="#4285f4" />
        </svg>
      </TaskButton>
      <TaskButton $wide $running aria-label="Brave">
        <svg width="26" height="30" viewBox="0 0 26 30" aria-hidden="true">
          <path d="M8 0h10l3 3 3-.5L25.500 6l-1 3 .5 3-3.500 12L13 30l-8.500-6L1 12l.5-3-1-3L2 2.500 5 3z" fill="#fb4a1d" />
          <path d="M13 5l5-1 3.500 5-1 3 1 2-4 4 .5 3L13 25l-5-4 .5-3-4-4 1-2-1-3L8 4z" fill="#fff" />
          <path d="M7.500 10l4 1.500-.5 3zM18.500 10l-4 1.500.5 3zM13 15l2 3-2 1.500L11 18zM10 20.500l3 .8 3-.8-3 2.500z" fill="#fb4a1d" />
        </svg>
      </TaskButton>
    </Pinned>
    <Spacer />
    <Weather>
      <svg width="27" height="20" viewBox="0 0 27 20" aria-hidden="true">
        <path d="M14 3c4-4 12-3 12.500 4 .5 5-3 8-6 8z" fill="#3f8fd6" />
        <path d="M6 19a5.500 5.500 0 0 1-1-11C6 3 9 1.500 12.500 1.500S19 4 19.500 7c4-.5 6 2 6 5.500S23 19 20 19z" fill="#a9dbfa" />
        <path d="M3 16c0-4 3-6 7-5 1-3 5-4 8-2" fill="none" stroke="#d8f1fe" strokeWidth="3" />
      </svg>
      <span>29°C</span>
      <span>AQI 62</span>
    </Weather>
    <TrayToggle aria-label="Show hidden icons">
      <Icon w={16} h={10} sw={1.6}><path d="M1 9l7-7.500L15 9" /></Icon>
      <Tooltip>Show hidden icons</Tooltip>
    </TrayToggle>
    <TrayIcons>
      <Icon w={126} h={8} sw={1.5}><path d="M9 4c3-5 9-5 12 0M78 4c2-3 5-3 6 0M98 1v3M110 0c2 1 3 2 3 4" /></Icon>
    </TrayIcons>
    <Language>ENG</Language>
    <Clock>21:54<br />02-08-2021</Clock>
    <ActionCenter aria-label="Notifications">
      <svg width="34" height="32" viewBox="0 0 34 32" aria-hidden="true">
        <path d="M0 0h20v17h-9l-5 4v-4H0z" fill="#000" /><path d="M4 4.500h12M4 8.500h12M4 12.500h7" stroke="#fff" />
        <circle cx="20" cy="20" r="11" fill="#d8d9dc" fillOpacity="0.900" stroke="#777" />
        <text x="20" y="25" textAnchor="middle" fontSize="14" fontWeight="600" fill="#111">20</text>
      </svg>
    </ActionCenter>
  </Taskbar>
);

const App = () => (
  <Page>
    <GlobalStyle />
    <BrowserChrome />
    <Workspace>
      <LeftBar>
        <MenuButton aria-label="Menu">
          <Icon w={24} h={32} sw={2}>
            <path d="M1 3h20M1 11h22M1 18.500h22" /><circle cx="12" cy="27.500" r="3" fill="#b2b5be" stroke="none" />
          </Icon>
          <MenuBadge>5</MenuBadge>
        </MenuButton>
        {leftTools.map((group, i) => (
          <ToolGroup key={i}>
            {group.map(t => <ToolButton key={t.label} aria-label={t.label}>{t.icon}</ToolButton>)}
          </ToolGroup>
        ))}
      </LeftBar>
      <Main>
        <ChartPanel>
          <ChartHeader />
          <ChartArea>
            <Chart />
            <ChartLegend />
            <CurrencyButton>USD <LuChevronDown size={12} strokeWidth={3} /></CurrencyButton>
            <LogoButton $size={40} aria-label="TradingView"><TvMark /></LogoButton>
            <ScrollButton $size={35} aria-label="Scroll to the last bar">
              <Icon w={16} h={16} sw={2.4}><path d="M2 2l5.500 6L2 14M8.500 2l5.500 6-5.500 6" /></Icon>
            </ScrollButton>
          </ChartArea>
          <RangeBar>
            {ranges.map(r => <TextButton key={r}>{r}</TextButton>)}
            <Divider />
            <TextButton aria-label="Go to date">
              <Icon w={22} h={22}><path d="M2 9V5a2 2 0 0 1 2-2h15a2 2 0 0 1 2 2v13a2 2 0 0 1-2 2h-7M2 8h19M7 0v5M16 0v5M0 15.500h9M5.500 11.500l4 4-4 5" /></Icon>
            </TextButton>
            <Spacer />
            <RangeRight>
              <TextButton>16:24:05 (UTC)</TextButton>
              <Divider />
              <TextButton>%</TextButton>
              <TextButton>log</TextButton>
              <TextButton>auto</TextButton>
            </RangeRight>
          </RangeBar>
        </ChartPanel>
        <BottomTabs>
          <BottomTab>Stock Screener <LuChevronDown size={14} /></BottomTab>
          <BottomTab>Text Notes</BottomTab>
          <BottomTab>Pine Editor</BottomTab>
          <BottomTab>Strategy Tester</BottomTab>
          <BottomTab>Trading Panel</BottomTab>
          <BottomActions>
            <TextButton aria-label="Open panel"><Icon w={24} h={12}><path d="M1 11l11-9 11 9" /></Icon></TextButton>
            <TextButton aria-label="Maximize panel"><Icon w={24} h={21}><rect x="1" y="1" width="22" height="19" rx="2" /><path d="M1 4.500h22" /></Icon></TextButton>
          </BottomActions>
        </BottomTabs>
      </Main>
      <RightBar>
        {widgets.map((group, i) => (
          <WidgetGroup key={i}>
            {group.map(w => <WidgetButton key={w.label} aria-label={w.label}>{w.icon}</WidgetButton>)}
          </WidgetGroup>
        ))}
      </RightBar>
    </Workspace>
    <TaskbarView />
  </Page>
);

export default App;
